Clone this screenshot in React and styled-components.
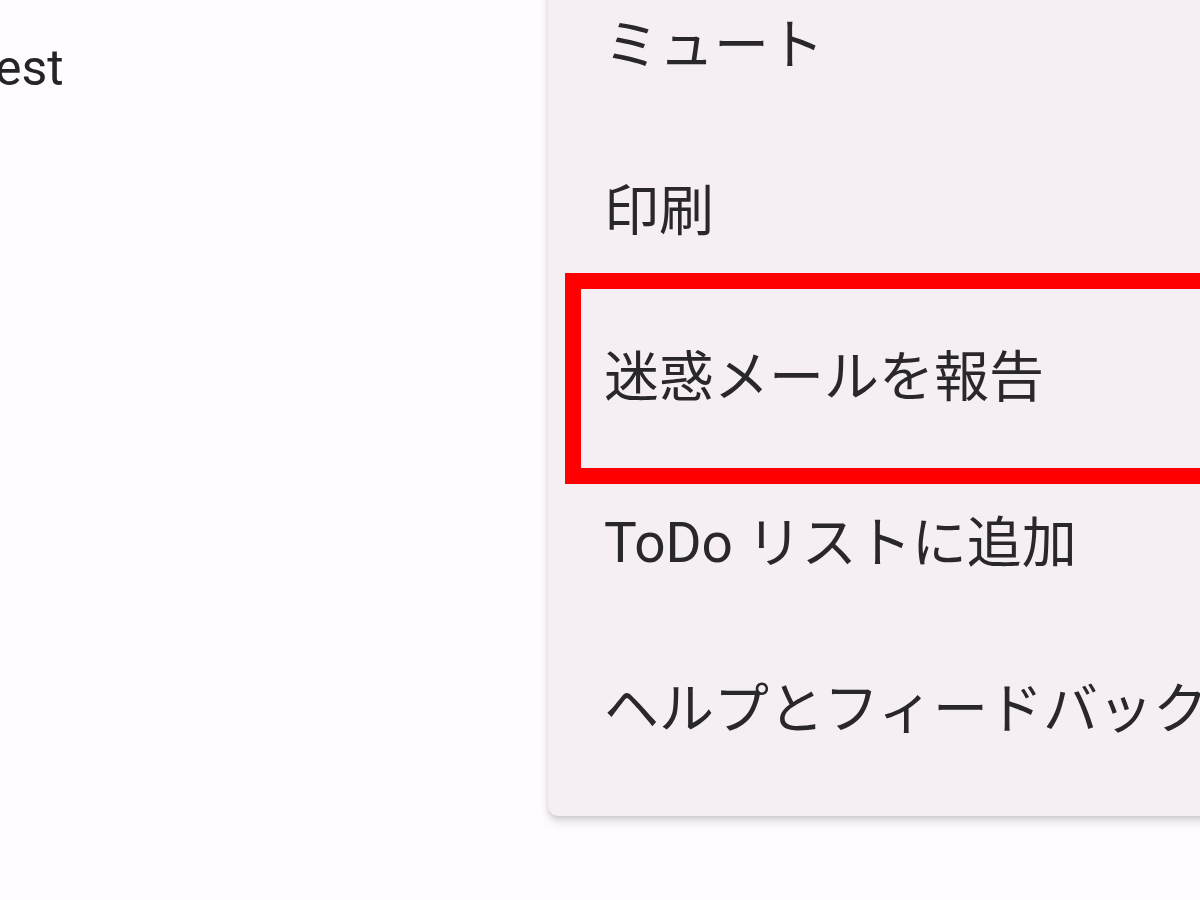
import React from "react";
import styled, { createGlobalStyle } from "styled-components";

const Global = createGlobalStyle`
  html, body { margin: 0; padding: 0; background: #fffbfe; }
  #root { width: 1200px; height: 900px; overflow: hidden; }
`;

const Screen = styled.div`
  width: 1200px;
  height: 900px;
  display: flex;
  overflow: hidden;
  background: #fffbfe;
  font-family: Roboto, "Noto Sans CJK JP", sans-serif;
`;

const Content = styled.div`
  flex: 0 0 548px;
  padding-top: 42px;
`;

const Subject = styled.div`
  font-size: 50px;
  line-height: 52px;
  color: #262428;
  margin-left: -5px;
`;

const Menu = styled.div`
  flex: 0 0 720px;
  align-self: flex-start;
  margin-top: -62px;
  padding: 24px 0;
  background: #f5eef2;
  border-radius: 10px;
  box-shadow: 0 6px 10px rgba(0, 0, 0, 0.12), 0 2px 4px rgba(0, 0, 0, 0.1);
`;

const Item = styled.div`
  position: relative;
  height: 166px;
  display: flex;
  align-items: center;
  padding-left: 56px;
  font-size: 55px;
  line-height: 1;
  color: #2a272c;
  white-space: nowrap;
`;

const Highlight = styled.div`
  position: absolute;
  top: -21px;
  bottom: -24px;
  left: 17px;
  right: -40px;
  border: 16px solid #ff0000;
  pointer-events: none;
`;

const items = [
  { label: "ミュート" },
  { label: "印刷" },
  { label: "迷惑メールを報告", marked: true },
  { label: "ToDo リストに追加" },
  { label: "ヘルプとフィードバック" },
];

export default function App() {
  return (
    <>
      <Global />
      <Screen>
        <Content>
          <Subject>est</Subject>
        </Content>
        <Menu>
          {items.map((it) => (
            <Item key={it.label}>
              {it.label}
              {it.marked && <Highlight />}
            </Item>
          ))}
        </Menu>
      </Screen>
    </>
  );
}
